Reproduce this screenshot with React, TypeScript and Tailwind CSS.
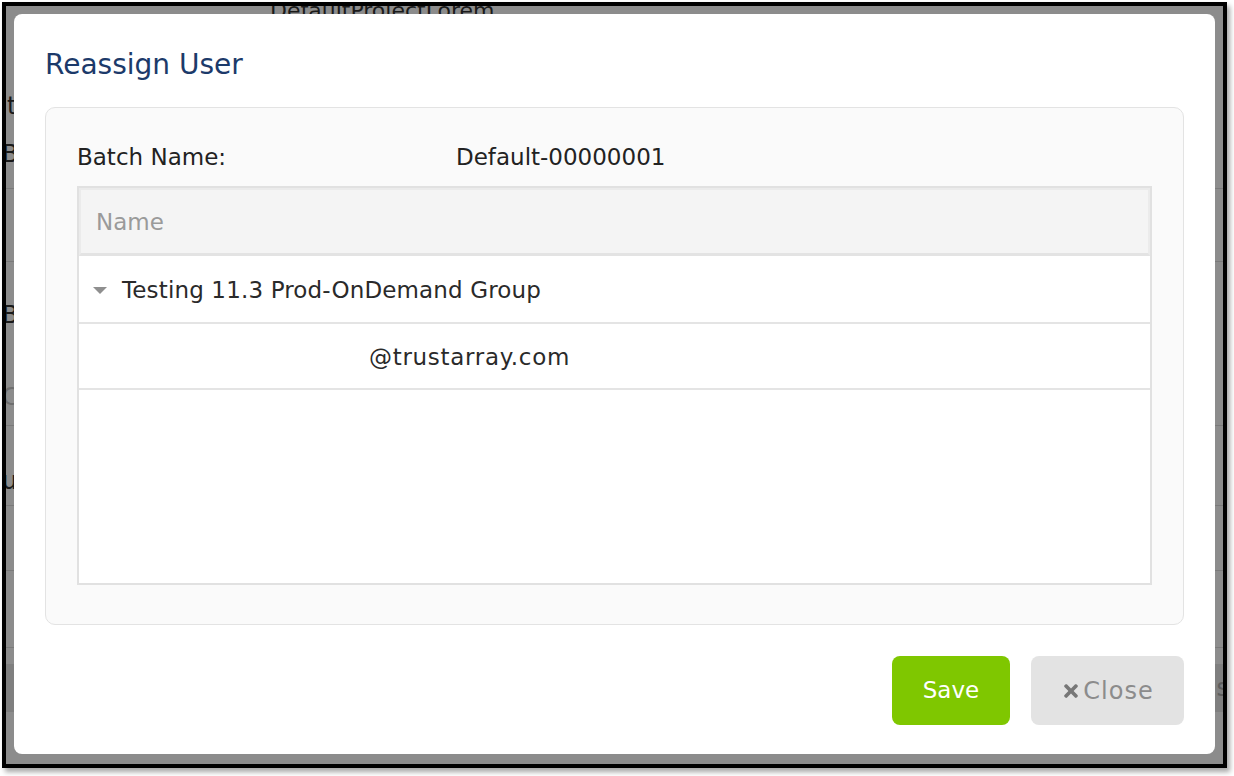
import { FaTimes } from "react-icons/fa";

export default function App() {
    return (
        <div className="w-[1234px] h-[776px] bg-white relative overflow-hidden font-['DejaVu_Sans',sans-serif]">
            {/* screenshot frame with dimmed page behind */}
            <div className="absolute left-[2px] top-[2px] w-[1225px] h-[766px] border-4 border-black bg-[#8c8c8c] shadow-[3px_4px_5px_rgba(0,0,0,0.35)] overflow-hidden">
                {/* background page, mostly hidden by the modal */}
                <div className="flex flex-col h-full text-[24px] text-[#1a1a1a]">
                    <div className="h-[50px]">
                        <div className="-mt-[12px] pl-[264px] text-[22px]">DefaultProjectLorem</div>
                    </div>
                    <div className="h-[64px] flex items-center pt-[36px] pl-[1px]">t</div>
                    <div className="h-[69px] flex items-center -ml-[4px] border-b border-[#7a7a7a]">B</div>
                    <div className="h-[73px] border-b border-[#7a7a7a]" />
                    <div className="h-[106px] flex items-center -ml-[4px]">B</div>
                    <div className="h-[58px] flex items-center -ml-[4px] text-[#6e6e6e] border-b border-[#7a7a7a]">C</div>
                    <div className="h-[80px] flex items-end pb-[6px] -ml-[4px] border-b border-[#7a7a7a]">u</div>
                    <div className="h-[65px] border-b border-[#7a7a7a]" />
                    <div className="h-[77px] border-b border-[#7a7a7a]" />
                    <div className="h-[16px]" />
                    <div className="h-[48px] bg-[#7f7f7f] flex items-center justify-end pr-[0px] text-[#5e5e5e]">
                        <span className="-mr-[6px]">s</span>
                    </div>
                </div>

                {/* modal */}
                <div className="absolute left-[8px] top-[8px] w-[1201px] h-[740px] bg-white rounded-[8px] px-[31px] flex flex-col">
                    <h2 className="h-[93px] pt-[33px] text-[28px] leading-[36px] text-[#1c3a6a]">Reassign User</h2>

                    <div className="h-[518px] bg-[#fafafa] border border-[#e3e3e3] rounded-[10px] px-[31px] pt-[28px]">
                        <div className="h-[40px] flex items-center pt-[2px] text-[23px] text-[#222]">
                            <span className="w-[379px]">Batch Name:</span>
                            <span>Default-00000001</span>
                        </div>

                        <div className="mt-[10px] h-[399px] border-2 border-[#e1e1e1] bg-white flex flex-col">
                            <div className="h-[68px] bg-[#f4f4f4] border-2 border-[#ebebeb] border-b-[3px] border-b-[#e3e3e3] flex items-center pl-[15px] pt-[2px] text-[23px] text-[#9a9a9a]">
                                Name
                            </div>
                            <div className="h-[68px] border-b-2 border-[#e4e4e4] flex items-center pl-[14px] pt-[2px] text-[23px] tracking-[0.15px] text-[#2a2a2a]">
                                <svg width="14" height="8" viewBox="0 0 14 8" className="mr-[15px] mt-[2px]">
                                    <path d="M0 0 L14 0 L7 7 Z" fill="#8f8f8f" />
                                </svg>
                                Testing 11.3 Prod-OnDemand Group
                            </div>
                            <div className="h-[66px] border-b-2 border-[#e4e4e4] flex items-center pl-[290px] pt-[2px] text-[23px] tracking-[0.7px] text-[#2a2a2a]">
                                @trustarray.com
                            </div>
                        </div>
                    </div>

                    <div className="flex justify-end gap-[21px] mt-[31px]">
                        <button className="w-[118px] h-[69px] rounded-[8px] bg-[#7fc700] text-white text-[23px]">Save</button>
                        <button className="w-[153px] h-[69px] rounded-[8px] bg-[#e3e3e3] text-[#8c8c8c] text-[24px] tracking-[1px] flex items-center justify-center gap-[2px]">
                            <FaTimes className="text-[#777] text-[20px]" />
                            Close
                        </button>
                    </div>
                </div>
            </div>
        </div>
    );
}
